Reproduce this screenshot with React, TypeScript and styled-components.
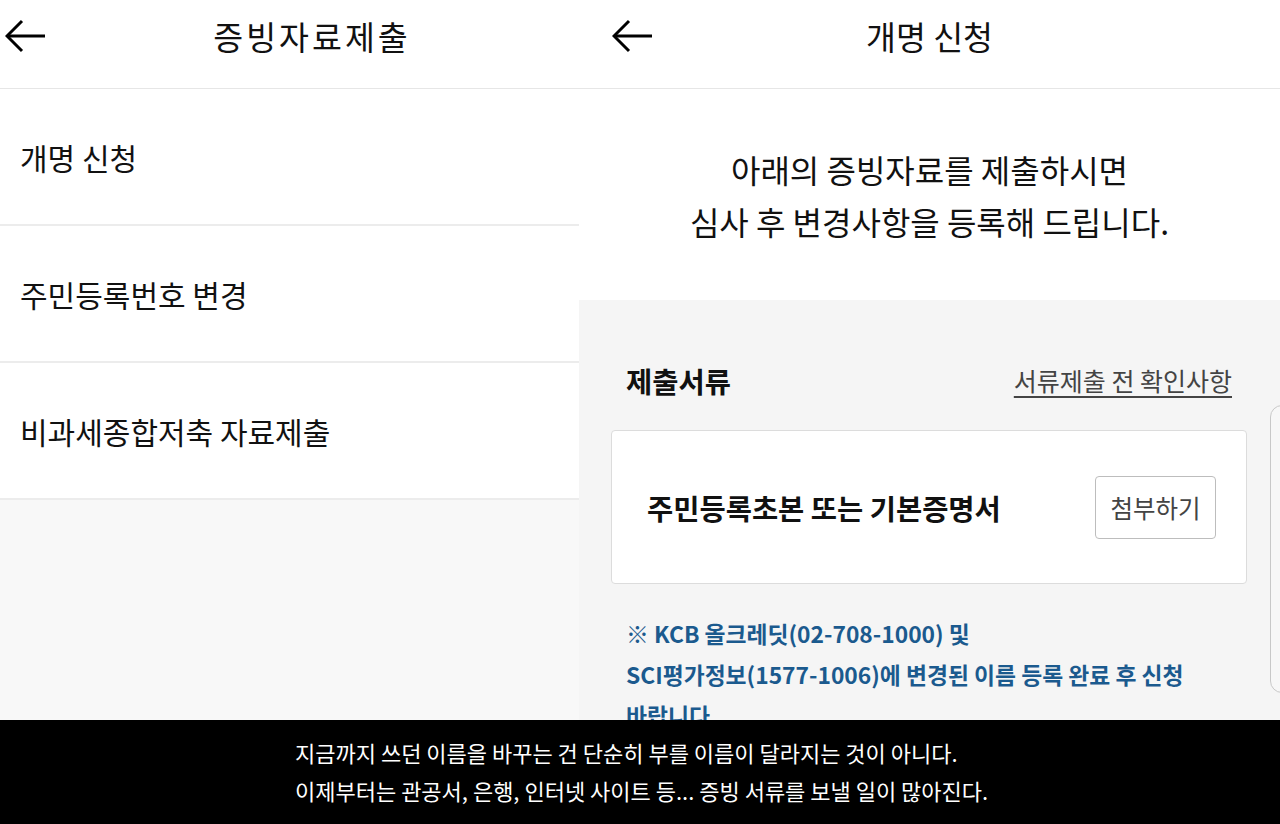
import React from 'react';
import styled, {createGlobalStyle} from 'styled-components';

const Global = createGlobalStyle`
  html, body {
    margin: 0;
    padding: 0;
    background: #fff;
  }
  body {
    font-family: 'Noto Sans CJK KR', 'Noto Sans', sans-serif;
    color: #111;
    overflow: hidden;
  }
  * {
    box-sizing: border-box;
  }
`;

const Back = () => (
  <svg width="40" height="34" viewBox="0 0 40 34" fill="none">
    <path d="M2 17H40" stroke="#000" strokeWidth="3" />
    <path d="M17 2L2 17L17 32" stroke="#000" strokeWidth="3" />
  </svg>
);

const screens = ['개명 신청', '주민등록번호 변경', '비과세종합저축 자료제출'];

export default () => (
  <Page>
    <Global />
    <Panel $width="579px" $bg="#f8f8f8">
      <Header $left="5px" $right="0px">
        <Back />
        <Title $spacing="3px">증빙자료제출</Title>
      </Header>
      {screens.map((s) => (
        <Row key={s}>{s}</Row>
      ))}
    </Panel>

    <Panel $width="auto" $bg="#f5f5f5">
      <Header $left="33px" $right="33px">
        <Back />
        <Title>개명 신청</Title>
        <Spacer />
      </Header>
      <Intro>
        아래의 증빙자료를 제출하시면
        <br />
        심사 후 변경사항을 등록해 드립니다.
      </Intro>
      <Docs>
        <DocsHead>
          <h2>제출서류</h2>
          <a>서류제출 전 확인사항</a>
        </DocsHead>
        <Card>
          <strong>주민등록초본 또는 기본증명서</strong>
          <Attach>첨부하기</Attach>
        </Card>
        <Note>
          ※ KCB 올크레딧(02-708-1000) 및
          <br />
          SCI평가정보(1577-1006)에 변경된 이름 등록 완료 후 신청
          <br />
          바랍니다.
        </Note>
        <NextCard />
      </Docs>
    </Panel>

    <Subtitle>
      지금까지 쓰던 이름을 바꾸는 건 단순히 부를 이름이 달라지는 것이 아니다.
      <br />
      이제부터는 관공서, 은행, 인터넷 사이트 등... 증빙 서류를 보낼 일이 많아진다.
    </Subtitle>
  </Page>
);

const Page = styled.div`
  display: flex;
  width: 1280px;
  height: 824px;
  overflow: hidden;
  position: relative;
`;

const Panel = styled.div<{$width: string; $bg: string}>`
  width: ${(p) => p.$width};
  flex: ${(p) => (p.$width === 'auto' ? '1' : '0 0 auto')};
  display: flex;
  flex-direction: column;
  background: ${(p) => p.$bg};
  position: relative;
`;

const Header = styled.header<{$left: string; $right: string}>`
  height: 89px;
  flex: 0 0 auto;
  display: flex;
  align-items: flex-start;
  padding: 19px ${(p) => p.$right} 0 ${(p) => p.$left};
  background: #fff;
  border-bottom: 1px solid #e6e6e6;

  svg {
    flex: 0 0 auto;
  }
`;

const Title = styled.h1<{$spacing?: string}>`
  flex: 1;
  margin: 0;
  text-align: center;
  font-size: 32.5px;
  font-weight: 400;
  line-height: 34px;
  letter-spacing: ${(p) => p.$spacing || '0'};
  color: #111;
`;

const Spacer = styled.div`
  width: 40px;
  flex: 0 0 auto;
`;

const Row = styled.div`
  height: 137px;
  display: flex;
  align-items: center;
  padding-left: 20px;
  background: #fff;
  border-bottom: 2px solid #ececec;
  font-size: 30px;
  color: #111;
`;

const Intro = styled.p`
  height: 211px;
  margin: 0;
  display: flex;
  flex-direction: column;
  justify-content: center;
  align-items: center;
  text-align: center;
  background: #fff;
  font-size: 32px;
  line-height: 52px;
  color: #111;
`;

const Docs = styled.section`
  flex: 1;
  padding: 60px 33px 0 32px;
`;

const DocsHead = styled.div`
  height: 40px;
  display: flex;
  align-items: center;
  justify-content: space-between;
  padding: 0 15px;
  margin-bottom: 30px;

  h2 {
    margin: 0;
    font-size: 28.5px;
    font-weight: 700;
    color: #111;
  }

  a {
    font-size: 25px;
    color: #444;
    text-decoration: underline;
    text-underline-offset: 5px;
  }
`;

const Card = styled.div`
  height: 154px;
  display: flex;
  align-items: center;
  justify-content: space-between;
  padding: 0 30px 0 35px;
  background: #fff;
  border: 1px solid #dcdcdc;
  border-radius: 4px;

  strong {
    font-size: 28.5px;
    font-weight: 700;
    color: #111;
  }
`;

const Attach = styled.button`
  width: 121px;
  height: 63px;
  background: #fff;
  border: 1.5px solid #bdbdbd;
  border-radius: 4px;
  font-family: inherit;
  font-size: 24.5px;
  color: #444;
`;

const Note = styled.p`
  margin: 29px 0 0 15px;
  font-size: 22.8px;
  font-weight: 700;
  line-height: 41px;
  color: #1b5a8e;
`;

const NextCard = styled.div`
  position: absolute;
  top: 405px;
  right: -30px;
  width: 40px;
  height: 288px;
  background: #f7f7f7;
  border: 1.5px solid #c8c8c8;
  border-radius: 12px;
`;

const Subtitle = styled.div`
  position: absolute;
  left: 0;
  right: 0;
  bottom: 0;
  height: 104px;
  padding: 13px 0 0 295px;
  background: #000;
  color: #fff;
  text-align: left;
  font-size: 22px;
  line-height: 38px;
`;
